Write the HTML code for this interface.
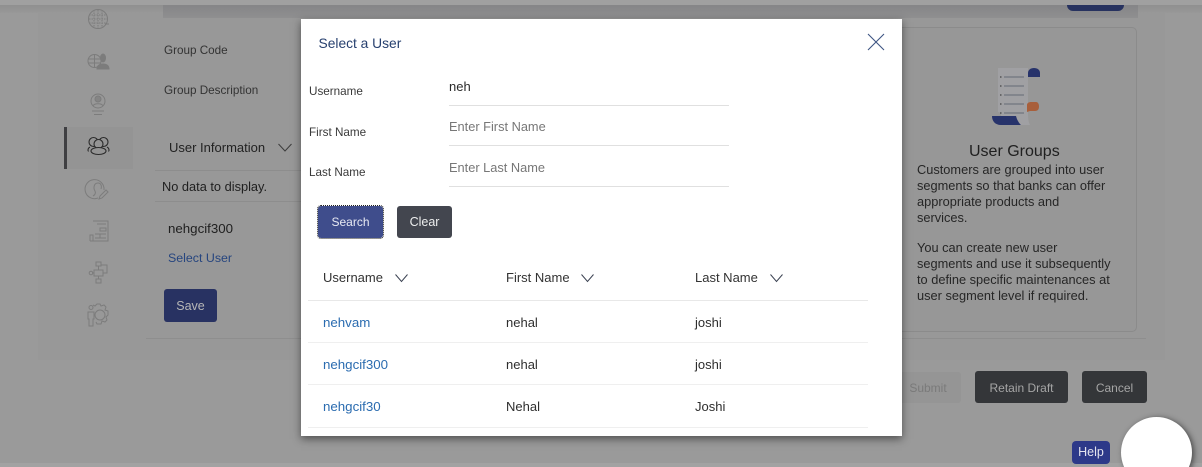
<!DOCTYPE html>
<html><head><meta charset="utf-8"><style>
*{box-sizing:border-box}
html,body{margin:0;padding:0;width:1202px;height:467px;overflow:hidden;background:#9a9a9a;font-family:"Liberation Sans",sans-serif}
#r{position:relative;width:1202px;height:467px;overflow:hidden}
.a{position:absolute;white-space:nowrap;line-height:16px;font-size:13px;color:#2e2e2e}
.box{position:absolute}
.lbl{color:#3a3a3a;font-size:11.7px}
.ph{color:#777;font-size:12.8px}
.lk{color:#2b6cb0;font-size:13.3px}
.t{color:#2e2e2e;font-size:13px}
.btn{position:absolute;border-radius:3px;text-align:center;font-size:12px}
svg{position:absolute;overflow:visible}
</style></head><body><div id="r">
<div class="box" style="left:38px;top:5px;width:1127px;height:355px;background:#989898"></div>
<div class="box" style="left:0;top:0;width:1202px;height:5px;background:#a0a0a0"></div>
<div class="box" style="left:0;top:5px;width:1202px;height:8px;background:linear-gradient(#8f8f8f,#989898)"></div>
<div class="box" style="left:163px;top:5px;width:975px;height:13px;background:linear-gradient(#858587,#8f8f90)"></div>
<div class="box" style="left:1067px;top:5px;width:57px;height:6px;background:#27325f;border-radius:0 0 12px 12px"></div>
<div class="box" style="left:0;top:463px;width:1202px;height:4px;background:#a2a2a2"></div>
<!-- Sidebar -->
<div class="box" style="left:64px;top:127px;width:69px;height:42px;background:#949494;border-left:3px solid #3f3f42"></div>
<svg style="left:0;top:0" width="140" height="340" fill="none" stroke="#7c7c7c" stroke-width="1">
<circle cx="98" cy="19" r="9.5"/><path d="M89 15h18M89 19h18M89 23h18M94 10v18M98 10v18M102 10v18" stroke-dasharray="1.5 1"/><path d="M105 24h4"/>
<circle cx="94.500" cy="61" r="6.500"/><path d="M88 59h13M88 63h13M94.500 54.500v13"/><ellipse cx="103" cy="58" rx="2.500" ry="4" fill="#7c7c7c"/><path d="M97 69c0-3 2-5 6-5s6 2 6 5z" fill="#7c7c7c"/>
<circle cx="98" cy="101" r="7"/><circle cx="98" cy="99" r="3" fill="#858585"/><path d="M93 106c1-3 9-3 10 0M92 111h12M94 114.500h8"/>
<g stroke="#2b2b2b" stroke-width="1.100"><circle cx="93.500" cy="142" r="4.500"/><circle cx="103.500" cy="142" r="4.500"/><circle cx="98.500" cy="144" r="4.500" fill="#949494"/><ellipse cx="98.500" cy="151" rx="7.500" ry="3.500" fill="#949494"/><path d="M90 147c-2 1-2.500 3-1.500 4.500M107 147c2 1 2.500 3 1.500 4.500"/></g>
<path d="M104 190a9.500 9.500 0 1 0-6 8M93 196c2-1 3-3 2-5-2-3-1-8 3-8 3 0 4 3 3 6"/><path d="M100 196l6-6 2 2-6 6-3 1z"/>
<path d="M93 221h15v20H93v-6M97 224h9M100 228h6v3h-6zM95 234h11M95 238h11M100 234v4"/><path d="M90 241v-6h3v6M90 241h3"/>
<path d="M96 262h5v4h-5zM94 270h9v6h-9zM96 279h5v4h-5zM98.500 266v4M98.500 276v3M103 273h4v-8h-6M94 273h-2"/><circle cx="91" cy="273" r="1.800"/>
<path d="M93 305l2 1 2-2h3l1 2 3-1 2 2-1 3 3 1v4l-2 2 1 3-2 2-3-1-1 3h-4l-1-2"/><path d="M88 312h6v7h-1v7h-4v-7h-1z"/><circle cx="91" cy="307.500" r="2"/><circle cx="100" cy="315" r="5"/>
</svg>
<!-- Main -->
<div class="a" style="left:164px;top:43px;font-size:11.700px;color:#333">Group Code</div>
<div class="a" style="left:164px;top:83px;font-size:11.700px;color:#333">Group Description</div>
<div class="a" style="left:169px;top:140px;font-size:13px;color:#222">User Information</div>
<svg style="left:278px;top:143px" width="14" height="9" fill="none" stroke="#3c3c3c"><path d="M0.500 1l6.500 7 6.500-7"/></svg>
<div class="box" style="left:155px;top:170px;width:146px;height:1px;background:#8d8d8d"></div>
<div class="a" style="left:162px;top:179px;font-size:12.800px;color:#1f1f1f">No data to display.</div>
<div class="box" style="left:155px;top:201px;width:146px;height:1px;background:#8d8d8d"></div>
<div class="a" style="left:168px;top:221px;font-size:13.300px;color:#1f1f1f">nehgcif300</div>
<div class="a" style="left:168px;top:250px;font-size:12.400px;color:#26457f">Select User</div>
<div class="btn" style="left:164px;top:289px;width:53px;height:33px;background:#283262;color:#b7b7b7;line-height:35px;font-size:12.500px">Save</div>
<div class="box" style="left:146px;top:338px;width:1000px;height:1px;background:#8e8e8e"></div>
<!-- Right card -->
<div class="box" style="left:880px;top:27px;width:257px;height:305px;background:#979797;border:1px solid #8b8b8b;border-radius:5px"></div>
<svg style="left:0;top:0" width="1202" height="467">
<path d="M998 68h30v42c0 7 0 11 2 15h-20c-6 0-9-3-9-8v-4l-3-1z" fill="#a0a0a3"/>
<path d="M1028 77v-4c0-3 2.500-5 6-5s6 2 6 5v4z" fill="#27336b"/>
<path d="M992 116h24c1 4 3 7 5 9h-20c-6 0-9-4-9-9z" fill="#27336b"/>
<path d="M1027 105c0-2 2-3 4-3h5c2 0 3 2 3 4.500s-1 4.500-4 4.500h-5l-3 1z" fill="#a85f3b"/>
<path d="M1004 77h20M1004 86h20M1004 95h20M1004 104h20M1004 113h20" stroke="#70757f" stroke-width="1.300"/>
<path d="M1000 77h1.500M1000 86h1.500M1000 95h1.500M1000 104h1.500M1000 113h1.500" stroke="#444" stroke-width="1.300"/>
</svg>
<div class="a" style="left:969px;top:142px;font-size:16px;line-height:19px;color:#1f1f1f">User Groups</div>
<div class="a" style="left:917px;top:162px;font-size:12.800px;color:#262626;line-height:16px">Customers are grouped into user<br>segments so that banks can offer<br>appropriate products and<br>services.</div>
<div class="a" style="left:917px;top:240px;font-size:12.800px;color:#262626;line-height:16px">You can create new user<br>segments and use it subsequently<br>to define specific maintenances at<br>user segment level if required.</div>
<!-- Footer buttons -->
<div class="btn" style="left:895px;top:372px;width:66px;height:31px;background:#959595;color:#7a7a7a;line-height:33px">Submit</div>
<div class="btn" style="left:975px;top:371px;width:93px;height:32px;background:#343639;color:#a5a5a5;line-height:35px">Retain Draft</div>
<div class="btn" style="left:1082px;top:371px;width:65px;height:32px;background:#343639;color:#a5a5a5;line-height:35px">Cancel</div>
<!-- Help -->
<div class="btn" style="left:1072px;top:441px;width:38px;height:23px;background:#2d3989;color:#e4e4ee;line-height:22px;font-size:12.500px;border-radius:4px">Help</div>
<div class="box" style="left:1121px;top:417px;width:71px;height:71px;border-radius:50%;background:#fff;box-shadow:2px 1px 6px rgba(30,30,30,.65)"></div>
<!-- Modal -->
<div class="box" style="left:301px;top:19px;width:601px;height:417px;background:#fff;box-shadow:0 3px 8px rgba(20,20,20,.55)"></div>
<div class="a" style="left:318.500px;top:36px;font-size:13.800px;color:#27406f">Select a User</div>
<svg style="left:867px;top:33px" width="18" height="18" fill="none" stroke="#3e5583" stroke-width="1.100"><path d="M1 1l16 16M17 1L1 17"/></svg>
<div class="a lbl" style="left:309px;top:84px">Username</div>
<div class="a lbl" style="left:309px;top:125px">First Name</div>
<div class="a lbl" style="left:309px;top:165px">Last Name</div>
<div class="a" style="left:449px;top:79px;font-size:13px;color:#2a2a2a">neh</div>
<div class="a ph" style="left:449px;top:119px">Enter First Name</div>
<div class="a ph" style="left:449px;top:160px">Enter Last Name</div>
<div class="box" style="left:449px;top:105px;width:280px;height:1px;background:#e0e0e0"></div>
<div class="box" style="left:449px;top:145px;width:280px;height:1px;background:#e0e0e0"></div>
<div class="box" style="left:449px;top:186px;width:280px;height:1px;background:#e0e0e0"></div>
<div class="btn" style="left:318px;top:206px;width:65px;height:32px;background:#3f4d8c;color:#e8eaf3;line-height:32px;font-size:12px;outline:1px dotted #222;outline-offset:0">Search</div>
<div class="btn" style="left:397px;top:206px;width:55px;height:32px;background:#43464f;color:#eceded;line-height:32px;font-size:12.500px">Clear</div>
<div class="a t" style="left:323px;top:270px;color:#333">Username</div>
<svg style="left:395px;top:274px" width="13" height="8" fill="none" stroke="#3b4252"><path d="M0.500 0.500l6 7 6-7"/></svg>
<div class="a t" style="left:506px;top:270px;color:#333">First Name</div>
<svg style="left:581px;top:274px" width="13" height="8" fill="none" stroke="#3b4252"><path d="M0.500 0.500l6 7 6-7"/></svg>
<div class="a t" style="left:695px;top:270px;color:#333">Last Name</div>
<svg style="left:770px;top:274px" width="13" height="8" fill="none" stroke="#3b4252"><path d="M0.500 0.500l6 7 6-7"/></svg>
<div class="box" style="left:308px;top:300px;width:560px;height:1px;background:#e8e8e8"></div>
<div class="box" style="left:308px;top:342px;width:560px;height:1px;background:#efefef"></div>
<div class="box" style="left:308px;top:384px;width:560px;height:1px;background:#efefef"></div>
<div class="box" style="left:308px;top:427px;width:560px;height:1px;background:#efefef"></div>
<div class="a lk" style="left:323px;top:315px">nehvam</div>
<div class="a t" style="left:506px;top:315px">nehal</div>
<div class="a t" style="left:695px;top:315px">joshi</div>
<div class="a lk" style="left:323px;top:357px">nehgcif300</div>
<div class="a t" style="left:506px;top:357px">nehal</div>
<div class="a t" style="left:695px;top:357px">joshi</div>
<div class="a lk" style="left:323px;top:399px">nehgcif30</div>
<div class="a t" style="left:506px;top:399px">Nehal</div>
<div class="a t" style="left:695px;top:399px">Joshi</div>
</div></body></html>
